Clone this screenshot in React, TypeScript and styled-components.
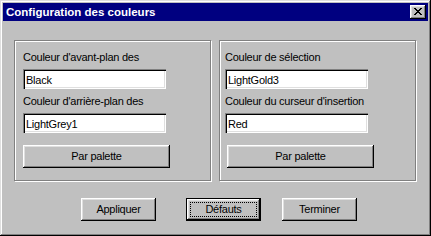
import React from 'react';
import styled, { createGlobalStyle } from 'styled-components';

const GlobalStyle = createGlobalStyle`
  html, body {
    margin: 0;
    padding: 0;
    background: #c0c0c0;
  }
  * {
    box-sizing: border-box;
  }
`;

const Window = styled.div`
  width: 431px;
  height: 236px;
  padding: 3px;
  background: #c0c0c0;
  box-shadow: inset -1px -1px #000, inset 1px 1px #dfdfdf,
    inset -2px -2px #808080, inset 2px 2px #fff;
  font-family: 'Liberation Sans', Arial, sans-serif;
  display: flex;
  flex-direction: column;
`;

const TitleBar = styled.div`
  height: 18px;
  background: #000080;
  display: flex;
  align-items: center;
  justify-content: space-between;
  padding: 0 2px 0 3px;
`;

const Title = styled.span`
  color: #fff;
  font-weight: bold;
  font-size: 11.5px;
  line-height: 14px;
`;

const CloseButton = styled.div`
  width: 16px;
  height: 14px;
  background: #c0c0c0;
  box-shadow: inset -1px -1px #000, inset 1px 1px #fff,
    inset -2px -2px #808080, inset 2px 2px #dfdfdf;
  display: flex;
  align-items: center;
  justify-content: center;
  padding-bottom: 1px;
`;

const Body = styled.div`
  padding: 19px 0 0 11px;
  display: flex;
  flex-direction: column;
`;

const GroupRow = styled.div`
  display: flex;
  gap: 8px;
`;

const Group = styled.div<{ $pad: number }>`
  width: 197px;
  height: 141px;
  border: 1px solid #808080;
  box-shadow: inset 1px 1px 0 #fff, 1px 1px 0 #fff;
  padding: 10px 0 0 ${(p) => p.$pad}px;
  display: flex;
  flex-direction: column;
  align-items: flex-start;
`;

const Label = styled.div<{ $top?: number }>`
  font-size: 11px;
  letter-spacing: -0.25px;
  line-height: 13px;
  height: 13px;
  color: #000;
  margin-top: ${(p) => p.$top ?? 0}px;
  margin-bottom: 5px;
  white-space: nowrap;
`;

const Field = styled.div`
  width: 143px;
  height: 20px;
  background: #fff;
  box-shadow: inset 1px 1px #808080, inset 2px 2px #000,
    inset -1px -1px #fff, inset -2px -2px #dfdfdf;
  padding: 1px 0 0 3px;
  display: flex;
  align-items: center;
  font-size: 11px;
  letter-spacing: -0.25px;
  color: #000;
`;

const Button = styled.div<{ $width: number; $left?: number; $top?: number }>`
  width: ${(p) => p.$width}px;
  height: 23px;
  margin-left: ${(p) => p.$left ?? 0}px;
  margin-top: ${(p) => p.$top ?? 0}px;
  background: #c0c0c0;
  box-shadow: inset -1px -1px #000, inset 1px 1px #fff,
    inset -2px -2px #808080, inset 2px 2px #dfdfdf;
  display: flex;
  align-items: center;
  justify-content: center;
  font-size: 11px;
  letter-spacing: -0.25px;
  color: #000;
  padding-bottom: 1px;
`;

const DefaultButton = styled(Button)`
  position: relative;
  border: 1px solid #000;

  &::after {
    content: '';
    position: absolute;
    inset: 3px;
    border: 1px dotted #000;
  }
`;

const ButtonRow = styled.div`
  display: flex;
  margin-top: 17px;
`;

const CloseGlyph: React.FC = () => {
  const rows = [
    'XX....XX',
    '.XX..XX.',
    '..XXXX..',
    '...XX...',
    '..XXXX..',
    '.XX..XX.',
    'XX....XX',
  ];
  return (
    <svg width="8" height="7" viewBox="0 0 8 7" shapeRendering="crispEdges">
      {rows.map((row, y) =>
        row.split('').map((c, x) =>
          c === 'X' ? <rect key={`${x}-${y}`} x={x} y={y} width="1" height="1" fill="#000" /> : null
        )
      )}
    </svg>
  );
};

const App: React.FC = () => {
  return (
    <>
      <GlobalStyle />
      <Window>
        <TitleBar>
          <Title>Configuration des couleurs</Title>
          <CloseButton>
            <CloseGlyph />
          </CloseButton>
        </TitleBar>
        <Body>
          <GroupRow>
            <Group $pad={8}>
              <Label>Couleur d'avant-plan des</Label>
              <Field>Black</Field>
              <Label $top={6}>Couleur d'arrière-plan des</Label>
              <Field>LightGrey1</Field>
              <Button $width={147} $top={12}>Par palette</Button>
            </Group>
            <Group $pad={5}>
              <Label>Couleur de sélection</Label>
              <Field>LightGold3</Field>
              <Label $top={6}>Couleur du curseur d'insertion</Label>
              <Field>Red</Field>
              <Button $width={147} $left={2} $top={12}>Par palette</Button>
            </Group>
          </GroupRow>
          <ButtonRow>
            <Button $width={75} $left={67}>Appliquer</Button>
            <DefaultButton $width={75} $left={30}>Défauts</DefaultButton>
            <Button $width={75} $left={21}>Terminer</Button>
          </ButtonRow>
        </Body>
      </Window>
    </>
  );
};

export default App;
